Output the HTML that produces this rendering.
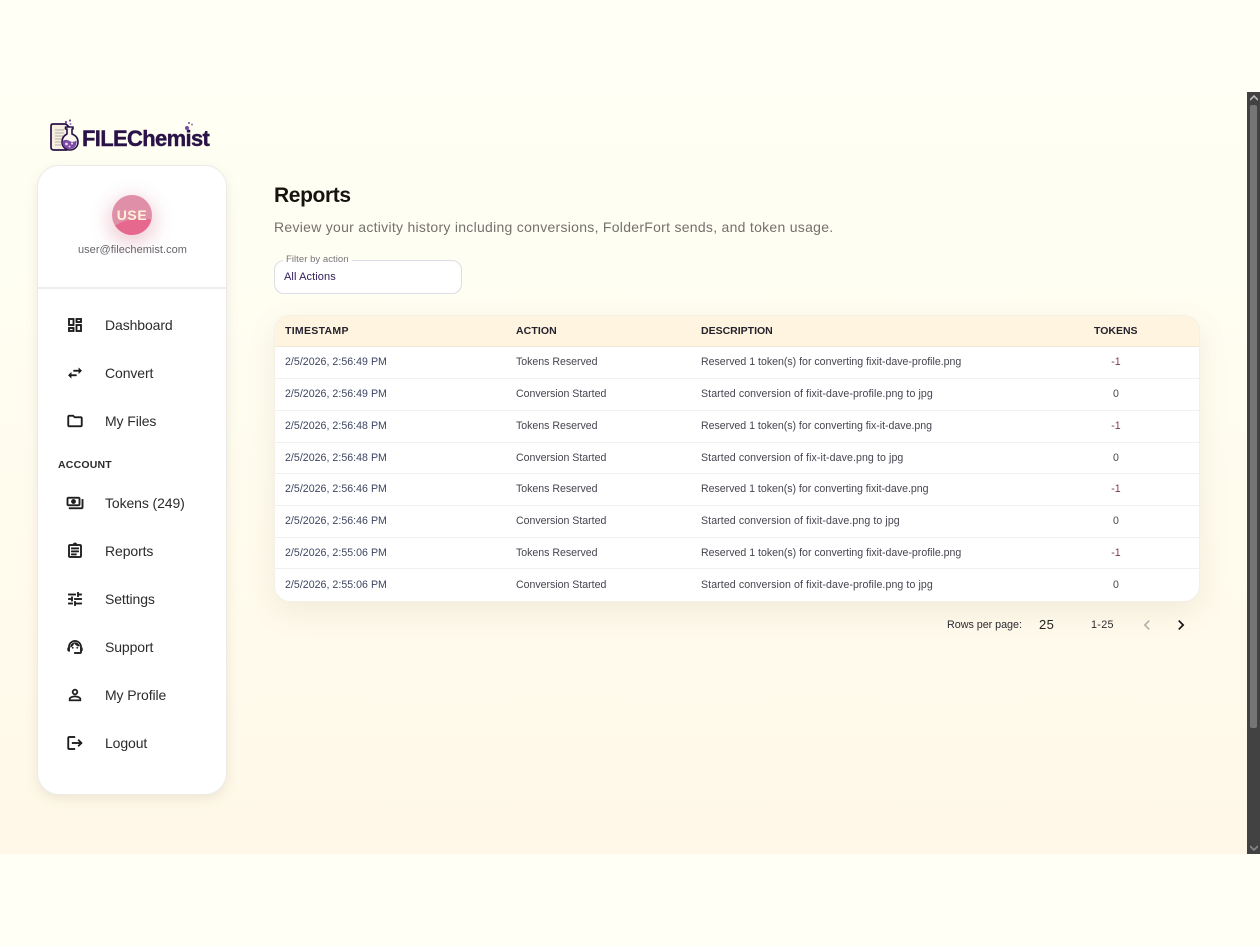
<!DOCTYPE html>
<html lang="en"><head><meta charset="utf-8"><title>Reports</title>
<style>
*{box-sizing:border-box}
html,body{margin:0;padding:0;width:1260px;height:946px;overflow:hidden;background:#fffff5;font-family:"Liberation Sans",sans-serif}
.t{position:absolute;white-space:nowrap;line-height:16px}
#bg{position:absolute;left:0;top:92px;width:1248px;height:762px;background:linear-gradient(180deg,#fffff4 0%,#fffdf0 40%,#fff8e8 100%)}
#sb{position:absolute;left:1247px;top:92px;width:13px;height:762px;background:#424242}
#thumb{position:absolute;left:3px;top:13px;width:7px;height:623px;background:#757575;border-radius:2px}
#side{position:absolute;left:37px;top:165px;width:190px;height:630px;background:#fff;border:1px solid #ecebe6;border-radius:22px;box-shadow:0 4px 12px rgba(120,100,60,.12)}
#sep{position:absolute;left:38px;top:287px;width:188px;height:2px;background:#eeeeee}
#av{position:absolute;left:112px;top:195px;width:40px;height:40px;border-radius:50%;overflow:hidden;background:#e08fa8;box-shadow:0 6px 18px 4px rgba(200,90,120,.28)}
#av i{position:absolute;left:-6px;top:24px;width:56px;height:30px;border-radius:50%;background:#e7688f;transform:rotate(-12deg)}
.nav{font-size:14px;color:#2b2b2b;letter-spacing:-.1px}
.ic{position:absolute;width:18px;height:18px;fill:#1d1d1d;stroke:#1d1d1d;stroke-width:.5}
.hd{font-size:10.5px;font-weight:700;color:#25222e}
.c{font-size:10.6px;color:#454550;letter-spacing:.03px}
.c.r{letter-spacing:-.01px}
.c.s{letter-spacing:.09px}
.c.a{letter-spacing:-.02px}
.d{color:#3d4560}
.m{color:#7d3a4c}
#tb{position:absolute;left:274px;top:315px;width:926px;height:287px;background:#fff;border-radius:16px;border:1px solid #f4f0e6;box-shadow:0 10px 30px rgba(120,100,60,.10);overflow:hidden}
#th{position:absolute;left:0;top:0;width:100%;height:31px;background:#fff4df;border-bottom:1px solid #f0e8d6}
.ln{position:absolute;left:0;width:100%;height:1px;background:#f1f1f1}
</style></head><body>
<div id="bg"></div>
<div id="sb"><div id="thumb"></div>
<svg style="position:absolute;left:3px;top:3px" width="8" height="6" viewBox="0 0 8 6"><path d="M0 5 4 1l4 4" fill="none" stroke="#bbb" stroke-width="1.6"/></svg>
<svg style="position:absolute;left:3px;top:753px" width="8" height="6" viewBox="0 0 8 6"><path d="M0 1l4 4 4-4" fill="none" stroke="#888" stroke-width="1.6"/></svg>
</div>

<!-- logo -->
<svg style="position:absolute;left:50px;top:119px" width="30" height="33" viewBox="0 0 30 33">
<path d="M3 5h13l4 4v19h-3v3H4c-2 0-3-1-3-2.500V7c0-1.200.8-2 2-2z" fill="#f7efdf" stroke="#2a1248" stroke-width="1.700" stroke-linejoin="round"/>
<path d="M5 11h9M5 14h9M5 17h8M5 20h7M5 23h6M5 26h6" stroke="#b5aca4" stroke-width="1"/>
<path d="M15.500 8h7.500v2h-1v5c4 1.500 6 4.500 6 8 0 4.500-3.500 8-8 8s-8-3.500-8-8c0-3.500 2-6.500 5-8v-5h-1.500z" fill="#fbf6ee" stroke="#2a1248" stroke-width="1.600" stroke-linejoin="round"/>
<path d="M12.500 22c2.500-1.500 4.500-1.500 7 0s4.500 1 7-.5c.6 5-2.500 8.500-7 8.500s-7.500-3.500-7-8z" fill="#7a4aa5"/>
<circle cx="16.500" cy="25" r="1.400" fill="#e5d5f0"/><circle cx="22" cy="24.500" r="1.100" fill="#e5d5f0"/><circle cx="19.500" cy="27.500" r="1" fill="#e5d5f0"/>
<circle cx="16" cy="3" r="1.100" fill="#7a4aa5"/><circle cx="20" cy="1.500" r="1.100" fill="#7a4aa5"/><circle cx="20.500" cy="5" r="1" fill="#9a70c0"/>
</svg>
<div class="t" style="left:82px;top:126px;font-size:22px;line-height:26px;font-weight:700;color:#2a1248;letter-spacing:-.66px;-webkit-text-stroke:.4px #2a1248">FILEChemist</div>
<svg style="position:absolute;left:183px;top:121px" width="12" height="12"><circle cx="4" cy="7" r="2" fill="#7a4aa5"/><circle cx="6" cy="2" r="1" fill="#7a4aa5"/><circle cx="9" cy="3.500" r="1" fill="#9a70c0"/></svg>

<div id="side"></div>
<div id="sep"></div>
<div id="av"><i></i></div>
<div class="t" style="left:112px;top:207px;width:40px;text-align:center;font-size:14px;font-weight:700;color:#fff2d8;letter-spacing:.6px">USE</div>
<div class="t" style="left:78px;top:242px;font-size:11px;color:#66646a;letter-spacing:.03px">user@filechemist.com</div>

<svg class="ic" style="left:66px;top:316px" viewBox="0 0 24 24"><path d="M19 5v2h-4V5h4M9 5v6H5V5h4m10 8v6h-4v-6h4M9 17v2H5v-2h4M21 3h-8v6h8V3zM11 3H3v10h8V3zm10 8h-8v10h8V11zm-10 4H3v6h8v-6z"/></svg>
<div class="t nav" style="left:105px;top:317px">Dashboard</div>
<svg class="ic" style="left:66px;top:364px" viewBox="0 0 24 24"><path d="M6.990 11 3 15l3.990 4v-3H14v-2H6.990v-3zM21 9l-3.990-4v3H10v2h7.010v3L21 9z"/></svg>
<div class="t nav" style="left:105px;top:365px">Convert</div>
<svg class="ic" style="left:66px;top:412px" viewBox="0 0 24 24"><path d="M9.170 6l2 2H20v10H4V6h5.170M10 4H4c-1.100 0-1.990.9-1.990 2L2 18c0 1.100.9 2 2 2h16c1.100 0 2-.9 2-2V8c0-1.100-.9-2-2-2h-8l-2-2z"/></svg>
<div class="t nav" style="left:105px;top:413px">My Files</div>
<div class="t" style="left:58px;top:457px;font-size:10.5px;font-weight:700;color:#2b2b2b;letter-spacing:.2px">ACCOUNT</div>
<svg class="ic" style="left:66px;top:494px" viewBox="0 0 24 24"><path d="M19 14V6c0-1.100-.9-2-2-2H3c-1.100 0-2 .9-2 2v8c0 1.100.9 2 2 2h14c1.100 0 2-.9 2-2zm-2 0H3V6h14v8zm-7-7c-1.660 0-3 1.340-3 3s1.340 3 3 3 3-1.340 3-3-1.340-3-3-3zm13 0v11c0 1.100-.9 2-2 2H4v-2h17V7h2z"/></svg>
<div class="t nav" style="left:105px;top:495px">Tokens (249)</div>
<svg class="ic" style="left:66px;top:542px" viewBox="0 0 24 24"><path d="M19 3h-4.180C14.400 1.840 13.300 1 12 1c-1.300 0-2.400.84-2.820 2H5c-1.100 0-2 .9-2 2v14c0 1.100.9 2 2 2h14c1.100 0 2-.9 2-2V5c0-1.100-.9-2-2-2zm0 16H5V5h14v14zM7 7.500h10v2H7zm0 4h10v2H7zm0 4h7v2H7z"/></svg>
<div class="t nav" style="left:105px;top:543px">Reports</div>
<svg class="ic" style="left:66px;top:590px" viewBox="0 0 24 24"><path d="M3 17v2h6v-2H3zM3 5v2h10V5H3zm10 16v-2h8v-2h-8v-2h-2v6h2zM7 9v2H3v2h4v2h2V9H7zm14 4v-2H11v2h10zm-6-4h2V7h4V5h-4V3h-2v6z"/></svg>
<div class="t nav" style="left:105px;top:591px">Settings</div>
<svg class="ic" style="left:66px;top:638px" viewBox="0 0 24 24"><path d="M21 12.220C21 6.730 16.740 3 12 3c-4.690 0-9 3.650-9 9.280-.6.34-1 .98-1 1.720v2c0 1.100.9 2 2 2h1v-6.100c0-3.870 3.130-7 7-7s7 3.130 7 7V19h-8v2h8c1.100 0 2-.9 2-2v-1.220c.59-.31 1-.92 1-1.620v-2.300c0-.67-.41-1.280-1-1.640z"/><circle cx="9" cy="13" r="1"/><circle cx="15" cy="13" r="1"/><path d="M18 11.030C17.520 8.180 15.040 6 12.050 6c-3.030 0-6.290 2.510-6.030 6.450 2.470-1.010 4.330-3.210 4.860-5.890 1.310 2.630 4 4.440 7.120 4.470z"/></svg>
<div class="t nav" style="left:105px;top:639px">Support</div>
<svg class="ic" style="left:66px;top:686px" viewBox="0 0 24 24"><path d="M12 5.900c1.160 0 2.100.94 2.100 2.100s-.94 2.100-2.100 2.100S9.900 9.160 9.900 8s.94-2.100 2.100-2.100m0 9c2.970 0 6.100 1.460 6.100 2.100v1.100H5.900V17c0-.64 3.130-2.100 6.100-2.100M12 4C9.790 4 8 5.790 8 8s1.790 4 4 4 4-1.790 4-4-1.790-4-4-4zm0 9c-2.670 0-8 1.340-8 4v3h16v-3c0-2.660-5.330-4-8-4z"/></svg>
<div class="t nav" style="left:105px;top:687px">My Profile</div>
<svg class="ic" style="left:66px;top:734px" viewBox="0 0 24 24"><path d="M17 7l-1.410 1.410L18.170 11H8v2h10.170l-2.580 2.580L17 17l5-5zM4 5h8V3H4c-1.100 0-2 .9-2 2v14c0 1.100.9 2 2 2h8v-2H4V5z"/></svg>
<div class="t nav" style="left:105px;top:735px">Logout</div>

<div class="t" style="left:274px;top:183px;font-size:21px;line-height:26px;font-weight:700;color:#17130f;letter-spacing:-.38px">Reports</div>
<div class="t" style="left:274px;top:219px;font-size:14px;color:#74716c;letter-spacing:.28px">Review your activity history including conversions, FolderFort sends, and token usage.</div>

<div style="position:absolute;left:274px;top:260px;width:188px;height:34px;background:#fff;border:1px solid #dcdce4;border-radius:10px"></div>
<div class="t" style="left:283px;top:252px;height:14px;padding:0 3px;font-size:9.5px;line-height:14px;color:#77757a;letter-spacing:.05px;background:linear-gradient(180deg,#fffef2 50%,#fff 50%);margin-top:1px">Filter by action</div>
<div class="t" style="left:284px;top:269px;font-size:11px;color:#33205a;letter-spacing:.1px">All Actions</div>

<div id="tb"><div id="th"></div>
<div class="ln" style="top:62px"></div><div class="ln" style="top:94px"></div><div class="ln" style="top:126px"></div><div class="ln" style="top:157px"></div><div class="ln" style="top:189px"></div><div class="ln" style="top:221px"></div><div class="ln" style="top:252px"></div>
</div>

<div class="t hd" style="left:285px;top:323px;letter-spacing:.3px">TIMESTAMP</div>
<div class="t hd" style="left:516px;top:323px;letter-spacing:.1px">ACTION</div>
<div class="t hd" style="left:701px;top:323px;letter-spacing:0">DESCRIPTION</div>
<div class="t hd" style="left:1094px;top:323px;letter-spacing:0">TOKENS</div>

<div class="t c d" style="left:285px;top:354px">2/5/2026, 2:56:49 PM</div><div class="t c a" style="left:516px;top:354px">Tokens Reserved</div><div class="t c r" style="left:701px;top:354px">Reserved 1 token(s) for converting fixit-dave-profile.png</div><div class="t c m" style="left:1096px;width:40px;text-align:center;top:354px">-1</div>
<div class="t c d" style="left:285px;top:386px">2/5/2026, 2:56:49 PM</div><div class="t c a" style="left:516px;top:386px">Conversion Started</div><div class="t c s" style="left:701px;top:386px">Started conversion of fixit-dave-profile.png to jpg</div><div class="t c" style="left:1096px;width:40px;text-align:center;top:386px">0</div>
<div class="t c d" style="left:285px;top:418px">2/5/2026, 2:56:48 PM</div><div class="t c a" style="left:516px;top:418px">Tokens Reserved</div><div class="t c" style="left:701px;top:418px;letter-spacing:-.02px">Reserved 1 token(s) for converting fix-it-dave.png</div><div class="t c m" style="left:1096px;width:40px;text-align:center;top:418px">-1</div>
<div class="t c d" style="left:285px;top:450px">2/5/2026, 2:56:48 PM</div><div class="t c a" style="left:516px;top:450px">Conversion Started</div><div class="t c s" style="left:701px;top:450px">Started conversion of fix-it-dave.png to jpg</div><div class="t c" style="left:1096px;width:40px;text-align:center;top:450px">0</div>
<div class="t c d" style="left:285px;top:481px">2/5/2026, 2:56:46 PM</div><div class="t c a" style="left:516px;top:481px">Tokens Reserved</div><div class="t c" style="left:701px;top:481px;letter-spacing:-.02px">Reserved 1 token(s) for converting fixit-dave.png</div><div class="t c m" style="left:1096px;width:40px;text-align:center;top:481px">-1</div>
<div class="t c d" style="left:285px;top:513px">2/5/2026, 2:56:46 PM</div><div class="t c a" style="left:516px;top:513px">Conversion Started</div><div class="t c s" style="left:701px;top:513px">Started conversion of fixit-dave.png to jpg</div><div class="t c" style="left:1096px;width:40px;text-align:center;top:513px">0</div>
<div class="t c d" style="left:285px;top:545px">2/5/2026, 2:55:06 PM</div><div class="t c a" style="left:516px;top:545px">Tokens Reserved</div><div class="t c r" style="left:701px;top:545px">Reserved 1 token(s) for converting fixit-dave-profile.png</div><div class="t c m" style="left:1096px;width:40px;text-align:center;top:545px">-1</div>
<div class="t c d" style="left:285px;top:577px">2/5/2026, 2:55:06 PM</div><div class="t c a" style="left:516px;top:577px">Conversion Started</div><div class="t c s" style="left:701px;top:577px">Started conversion of fixit-dave-profile.png to jpg</div><div class="t c" style="left:1096px;width:40px;text-align:center;top:577px">0</div>

<div class="t" style="left:947px;top:617px;font-size:10.8px;color:#2b2b33;letter-spacing:-.05px">Rows per page:</div>
<div class="t" style="left:1039px;top:617px;font-size:13px;color:#222;letter-spacing:.4px">25</div>
<div class="t" style="left:1091px;top:617px;font-size:10.8px;color:#2b2b33;letter-spacing:.3px">1-25</div>
<svg style="position:absolute;left:1137px;top:615px;fill:#b3b1ac" width="20" height="20" viewBox="0 0 24 24"><path d="M15.410 7.410 14 6l-6 6 6 6 1.410-1.410L10.830 12z"/></svg>
<svg style="position:absolute;left:1171px;top:615px;fill:#111" width="20" height="20" viewBox="0 0 24 24"><path d="M10 6 8.590 7.410 13.170 12l-4.580 4.590L10 18l6-6z"/></svg>
</body></html>
